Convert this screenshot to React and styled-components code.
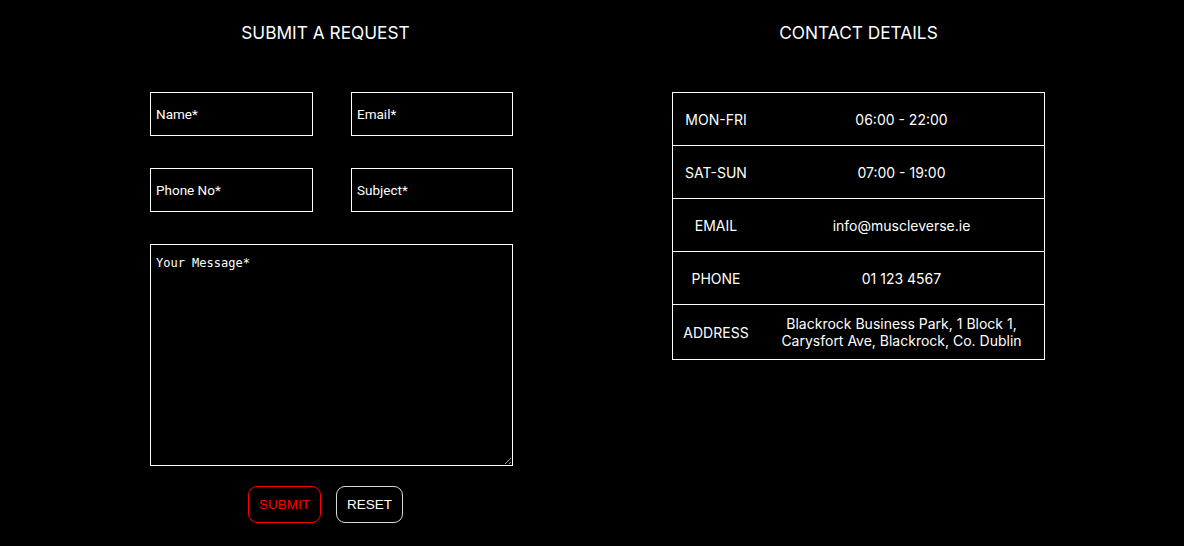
import React from "react";
import { styled, createGlobalStyle } from "styled-components";

const Global = createGlobalStyle`
  html, body {
    margin: 0;
    background: #000000;
  }
  body {
    font-family: Inter, "Open Sans", Arial, sans-serif;
    color: #ffffff;
  }
`;

const rows = [
  { label: "MON-FRI", value: "06:00 - 22:00" },
  { label: "SAT-SUN", value: "07:00 - 19:00" },
  { label: "EMAIL", value: "info@muscleverse.ie" },
  { label: "PHONE", value: "01 123 4567" },
  {
    label: "ADDRESS",
    value: (
      <>
        Blackrock Business Park, 1 Block 1,
        <br />
        Carysfort Ave, Blackrock, Co. Dublin
      </>
    ),
    tall: true,
  },
];

const App = () => {
  return (
    <Page>
      <Global />
      <FormCol>
        <Heading $shift="12px">SUBMIT A REQUEST</Heading>
        <Form onSubmit={(e) => e.preventDefault()}>
          <Field placeholder="Name*" />
          <Field placeholder="Email*" />
          <Field placeholder="Phone No*" />
          <Field placeholder="Subject*" />
          <Message placeholder="Your Message*" />
        </Form>
        <Buttons>
          <Button $color="#ff0000" $border="#ff0000">
            SUBMIT
          </Button>
          <Button $color="#ffffff" $border="#d8d8d8">
            RESET
          </Button>
        </Buttons>
      </FormCol>
      <ContactCol>
        <Heading>CONTACT DETAILS</Heading>
        <Table>
          <tbody>
            {rows.map((r) => (
              <Row key={r.label} $tall={r.tall}>
                <Label>{r.label}</Label>
                <Value>{r.value}</Value>
              </Row>
            ))}
          </tbody>
        </Table>
      </ContactCol>
    </Page>
  );
};

const Page = styled.div`
  display: flex;
  align-items: flex-start;
  padding: 22px 0 0 150px;
`;
const FormCol = styled.div`
  width: 363px;
  display: flex;
  flex-direction: column;
`;
const ContactCol = styled.div`
  width: 373px;
  margin-left: 159px;
  display: flex;
  flex-direction: column;
`;
const Heading = styled.h2`
  margin: 0 0 48px;
  padding-right: ${(p) => p.$shift || "0"};
  text-align: center;
  font-family: Inter, "Open Sans", Arial, sans-serif;
  font-weight: 400;
  font-size: 17.3px;
  line-height: 22px;
  color: #ffffff;
`;
const Form = styled.form`
  display: grid;
  grid-template-columns: 163px 162px;
  justify-content: space-between;
  row-gap: 32px;
`;
const Field = styled.input`
  box-sizing: border-box;
  height: 44px;
  width: 100%;
  padding: 0 5px;
  background: #000000;
  border: 1px solid #ffffff;
  color: #ffffff;
  font-family: Roboto, Arial, sans-serif;
  font-weight: 400;
  font-size: 13.5px;
  outline: none;
  &::placeholder {
    color: #ffffff;
  }
`;
const Message = styled.textarea`
  grid-column: 1 / -1;
  box-sizing: border-box;
  height: 222px;
  width: 100%;
  margin: 0;
  padding: 11px 5px;
  background: #000000;
  border: 1px solid #ffffff;
  color: #ffffff;
  font-family: "DejaVu Sans Mono", "Liberation Mono", monospace;
  font-size: 12px;
  outline: none;
  &::placeholder {
    color: #ffffff;
  }
`;
const Buttons = styled.div`
  display: flex;
  justify-content: center;
  gap: 15px;
  margin-top: 20px;
  padding-right: 12px;
`;
const Button = styled.button`
  height: 37px;
  padding: 0 10px;
  background: #000000;
  border: 1px solid ${(p) => p.$border};
  border-radius: 9px;
  color: ${(p) => p.$color};
  font-family: "Liberation Sans", Arial, sans-serif;
  font-size: 13.5px;
  cursor: pointer;
`;
const Table = styled.table`
  width: 100%;
  border-collapse: collapse;
  border: 1px solid #ffffff;
  font-size: 14px;
  color: #ffffff;
`;
const Row = styled.tr`
  height: ${(p) => (p.$tall ? "55px" : "53px")};
  border-bottom: 1px solid #ffffff;
`;
const Label = styled.td`
  width: 86px;
  padding: 0;
  text-align: center;
`;
const Value = styled.td`
  padding: 0;
  text-align: center;
  line-height: 17px;
`;

export default App;
